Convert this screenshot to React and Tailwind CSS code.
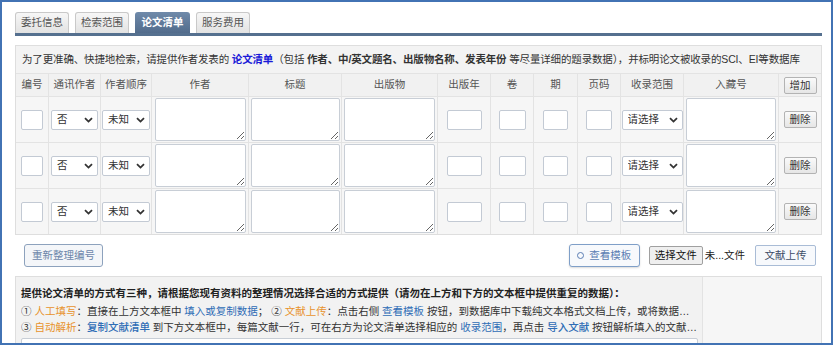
import React from 'react';

const cols = 'grid grid-cols-[33px_52px_51px_97px_93px_96px_53px_43px_44px_43px_63px_95px_42px]';

function Chevron() {
  return (
    <svg width="9" height="6" viewBox="0 0 9 6" className="shrink-0">
      <path d="M1 1.2 L4.5 4.6 L8 1.2" fill="none" stroke="#333" strokeWidth="1.8" />
    </svg>
  );
}

function Sel({ text, className, textW }) {
  return (
    <div className={`flex items-center justify-between h-[20px] border border-[#c3cad4] rounded-[2px] bg-white pl-[5px] pr-[4px] ${className}`}>
      <span className={`overflow-hidden whitespace-nowrap text-[#333] ${textW}`}>{text}</span>
      <Chevron />
    </div>
  );
}

function Box({ className }) {
  return <input className={`h-[20px] border border-[#c3cad4] rounded-[2px] bg-white ${className}`} />;
}

function Area({ className }) {
  return <textarea className={`h-[43px] border border-[#c8ced6] rounded-[2px] bg-white ${className}`} />;
}

function SmallBtn({ children }) {
  return (
    <button className="h-[17px] w-[33px] border border-[#b3b3b3] rounded-[2px] bg-gradient-to-b from-[#fafafa] to-[#e6e6e6] text-[10.5px] leading-none text-[#333]">
      {children}
    </button>
  );
}

function Cell({ children, last }) {
  return (
    <div className={`flex items-center justify-center ${last ? '' : 'border-r border-[#e3e3e3]'}`}>
      {children}
    </div>
  );
}

function Row() {
  return (
    <div className={`${cols} h-[46px] border-t border-[#e3e3e3] bg-[#f6f6f6]`}>
      <Cell><Box className="w-[22px]" /></Cell>
      <Cell><Sel text="否" className="w-[47px]" textW="w-[14px]" /></Cell>
      <Cell><Sel text="未知" className="w-[48px]" textW="w-[28px]" /></Cell>
      <Cell><Area className="w-[91px]" /></Cell>
      <Cell><Area className="w-[89px]" /></Cell>
      <Cell><Area className="w-[91px]" /></Cell>
      <Cell><Box className="w-[35px]" /></Cell>
      <Cell><Box className="w-[27px]" /></Cell>
      <Cell><Box className="w-[25px]" /></Cell>
      <Cell><Box className="w-[26px]" /></Cell>
      <Cell><Sel text="请选择" className="w-[61px]" textW="w-[36px]" /></Cell>
      <Cell><Area className="w-[90px]" /></Cell>
      <Cell last><SmallBtn>删除</SmallBtn></Cell>
    </div>
  );
}

const heads = ['编号', '通讯作者', '作者顺序', '作者', '标题', '出版物', '出版年', '卷', '期', '页码', '收录范围', '入藏号'];

export default function App() {
  const tabs = ['委托信息', '检索范围', '论文清单', '服务费用'];
  return (
    <div className="w-[833px] h-[345px] overflow-hidden border-2 border-[#4273b4] bg-white pl-[13px] pr-[9px] pt-[10px] font-['Liberation_Sans','Noto_Sans_CJK_SC',sans-serif] text-[10.5px] text-[#333]">
      {/* tabs */}
      <div className="flex gap-[6px] items-end h-[21px]">
        {tabs.map((t, i) =>
          i === 2 ? (
            <div key={t} className="w-[55px] h-[21px] flex items-center justify-center rounded-t-[3px] bg-gradient-to-b from-[#6f8aaa] to-[#526c8c] text-white font-bold">
              {t}
            </div>
          ) : (
            <div key={t} className="w-[54px] h-[21px] flex items-center justify-center rounded-t-[3px] border border-b-0 border-[#c9c9c9] bg-gradient-to-b from-[#f7f7f7] to-[#e2e2e2] text-[#555]">
              {t}
            </div>
          )
        )}
      </div>
      <div className="h-[3px] bg-[#55708f]" />

      {/* list panel */}
      <div className="mt-[9px] border border-[#dedede] bg-[#f3f3f3]">
        <div className="h-[27px] flex items-center pl-[6px] whitespace-nowrap leading-none tracking-[-0.15px]">
          为了更准确、快捷地检索，请提供作者发表的&nbsp;
          <span className="font-bold text-[#1a1ad8]">论文清单</span>
          （包括&nbsp;<span className="font-bold">作者、中/英文题名、出版物名称、发表年份</span>&nbsp;等尽量详细的题录数据），并标明论文被收录的SCI、EI等数据库
        </div>
        <div className={`${cols} h-[23px] border-t border-[#e3e3e3] bg-[#f1f1f1] text-[#555]`}>
          {heads.map((h) => (
            <Cell key={h}>{h}</Cell>
          ))}
          <Cell last><SmallBtn>增加</SmallBtn></Cell>
        </div>
        <Row />
        <Row />
        <Row />
      </div>

      {/* actions */}
      <div className="mt-[9px] h-[23px] flex items-center pl-[9px] pr-[6px]">
        <button className="h-[23px] w-[79px] border border-[#8da2bd] rounded-[3px] bg-[#f4f6f9] text-[#6c86aa] leading-none">
          重新整理编号
        </button>
        <div className="ml-auto flex items-center">
          <button className="h-[23px] w-[71px] flex items-center justify-center gap-[5px] border border-[#7f9fc8] rounded-[3px] bg-[#f7f9fc] text-[#5b7db3] leading-none shadow-[0_1px_2px_rgba(0,0,0,0.15)]">
            <span className="w-[7px] h-[7px] rounded-full border border-[#5b7db3]" />
            查看模板
          </button>
          <button className="ml-[9px] h-[19px] px-[5px] border border-[#a0a0a0] rounded-[2px] bg-[#efefef] text-[#111] leading-none">
            选择文件
          </button>
          <span className="ml-[2px] text-[#222]">未...文件</span>
          <button className="ml-[10px] h-[21px] w-[61px] border border-[#a9bcd6] rounded-[2px] bg-[#f7f9fc] text-[#3e4c66] leading-none">
            文献上传
          </button>
        </div>
      </div>

      {/* help panel */}
      <div className="mt-[9px] flex border border-[#dedede] h-[80px]">
        <div className="w-[686px] bg-[#f2f2f2] pl-[5px] pt-[9px] pr-[4px]">
          <div className="font-bold leading-[15px] whitespace-nowrap text-[#222] mb-[3px]">
            提供论文清单的方式有三种，请根据您现有资料的整理情况选择合适的方式提供（请勿在上方和下方的文本框中提供重复的数据）：
          </div>
          <div className="leading-[15.5px] whitespace-nowrap overflow-hidden text-ellipsis">
            ①&nbsp;<span className="text-[#e8922c]">人工填写</span>：直接在上方文本框中&nbsp;
            <span className="text-[#2f6db6]">填入或复制数据</span>；&nbsp;②&nbsp;
            <span className="text-[#e8922c]">文献上传</span>：点击右侧&nbsp;
            <span className="text-[#2f6db6]">查看模板</span>&nbsp;按钮，到数据库中下载纯文本格式文档上传，或将数据库导出的数据复制到下方文本框中
          </div>
          <div className="leading-[15.5px] whitespace-nowrap overflow-hidden text-ellipsis">
            ③&nbsp;<span className="text-[#e8922c]">自动解析</span>：
            <span className="text-[#2f6db6] font-medium">复制文献清单</span>&nbsp;到下方文本框中，每篇文献一行，可在右方为论文清单选择相应的&nbsp;
            <span className="text-[#2f6db6]">收录范围</span>，再点击&nbsp;
            <span className="text-[#2f6db6] font-medium">导入文献</span>&nbsp;按钮解析填入的文献清单数据
          </div>
          <textarea className="mt-[3px] w-[677px] h-[60px] border border-[#c8ced6] rounded-[2px] bg-white block" />
        </div>
        <div className="flex-1 border-l border-[#e3e3e3] bg-[#f6f6f6]" />
      </div>
    </div>
  );
}
